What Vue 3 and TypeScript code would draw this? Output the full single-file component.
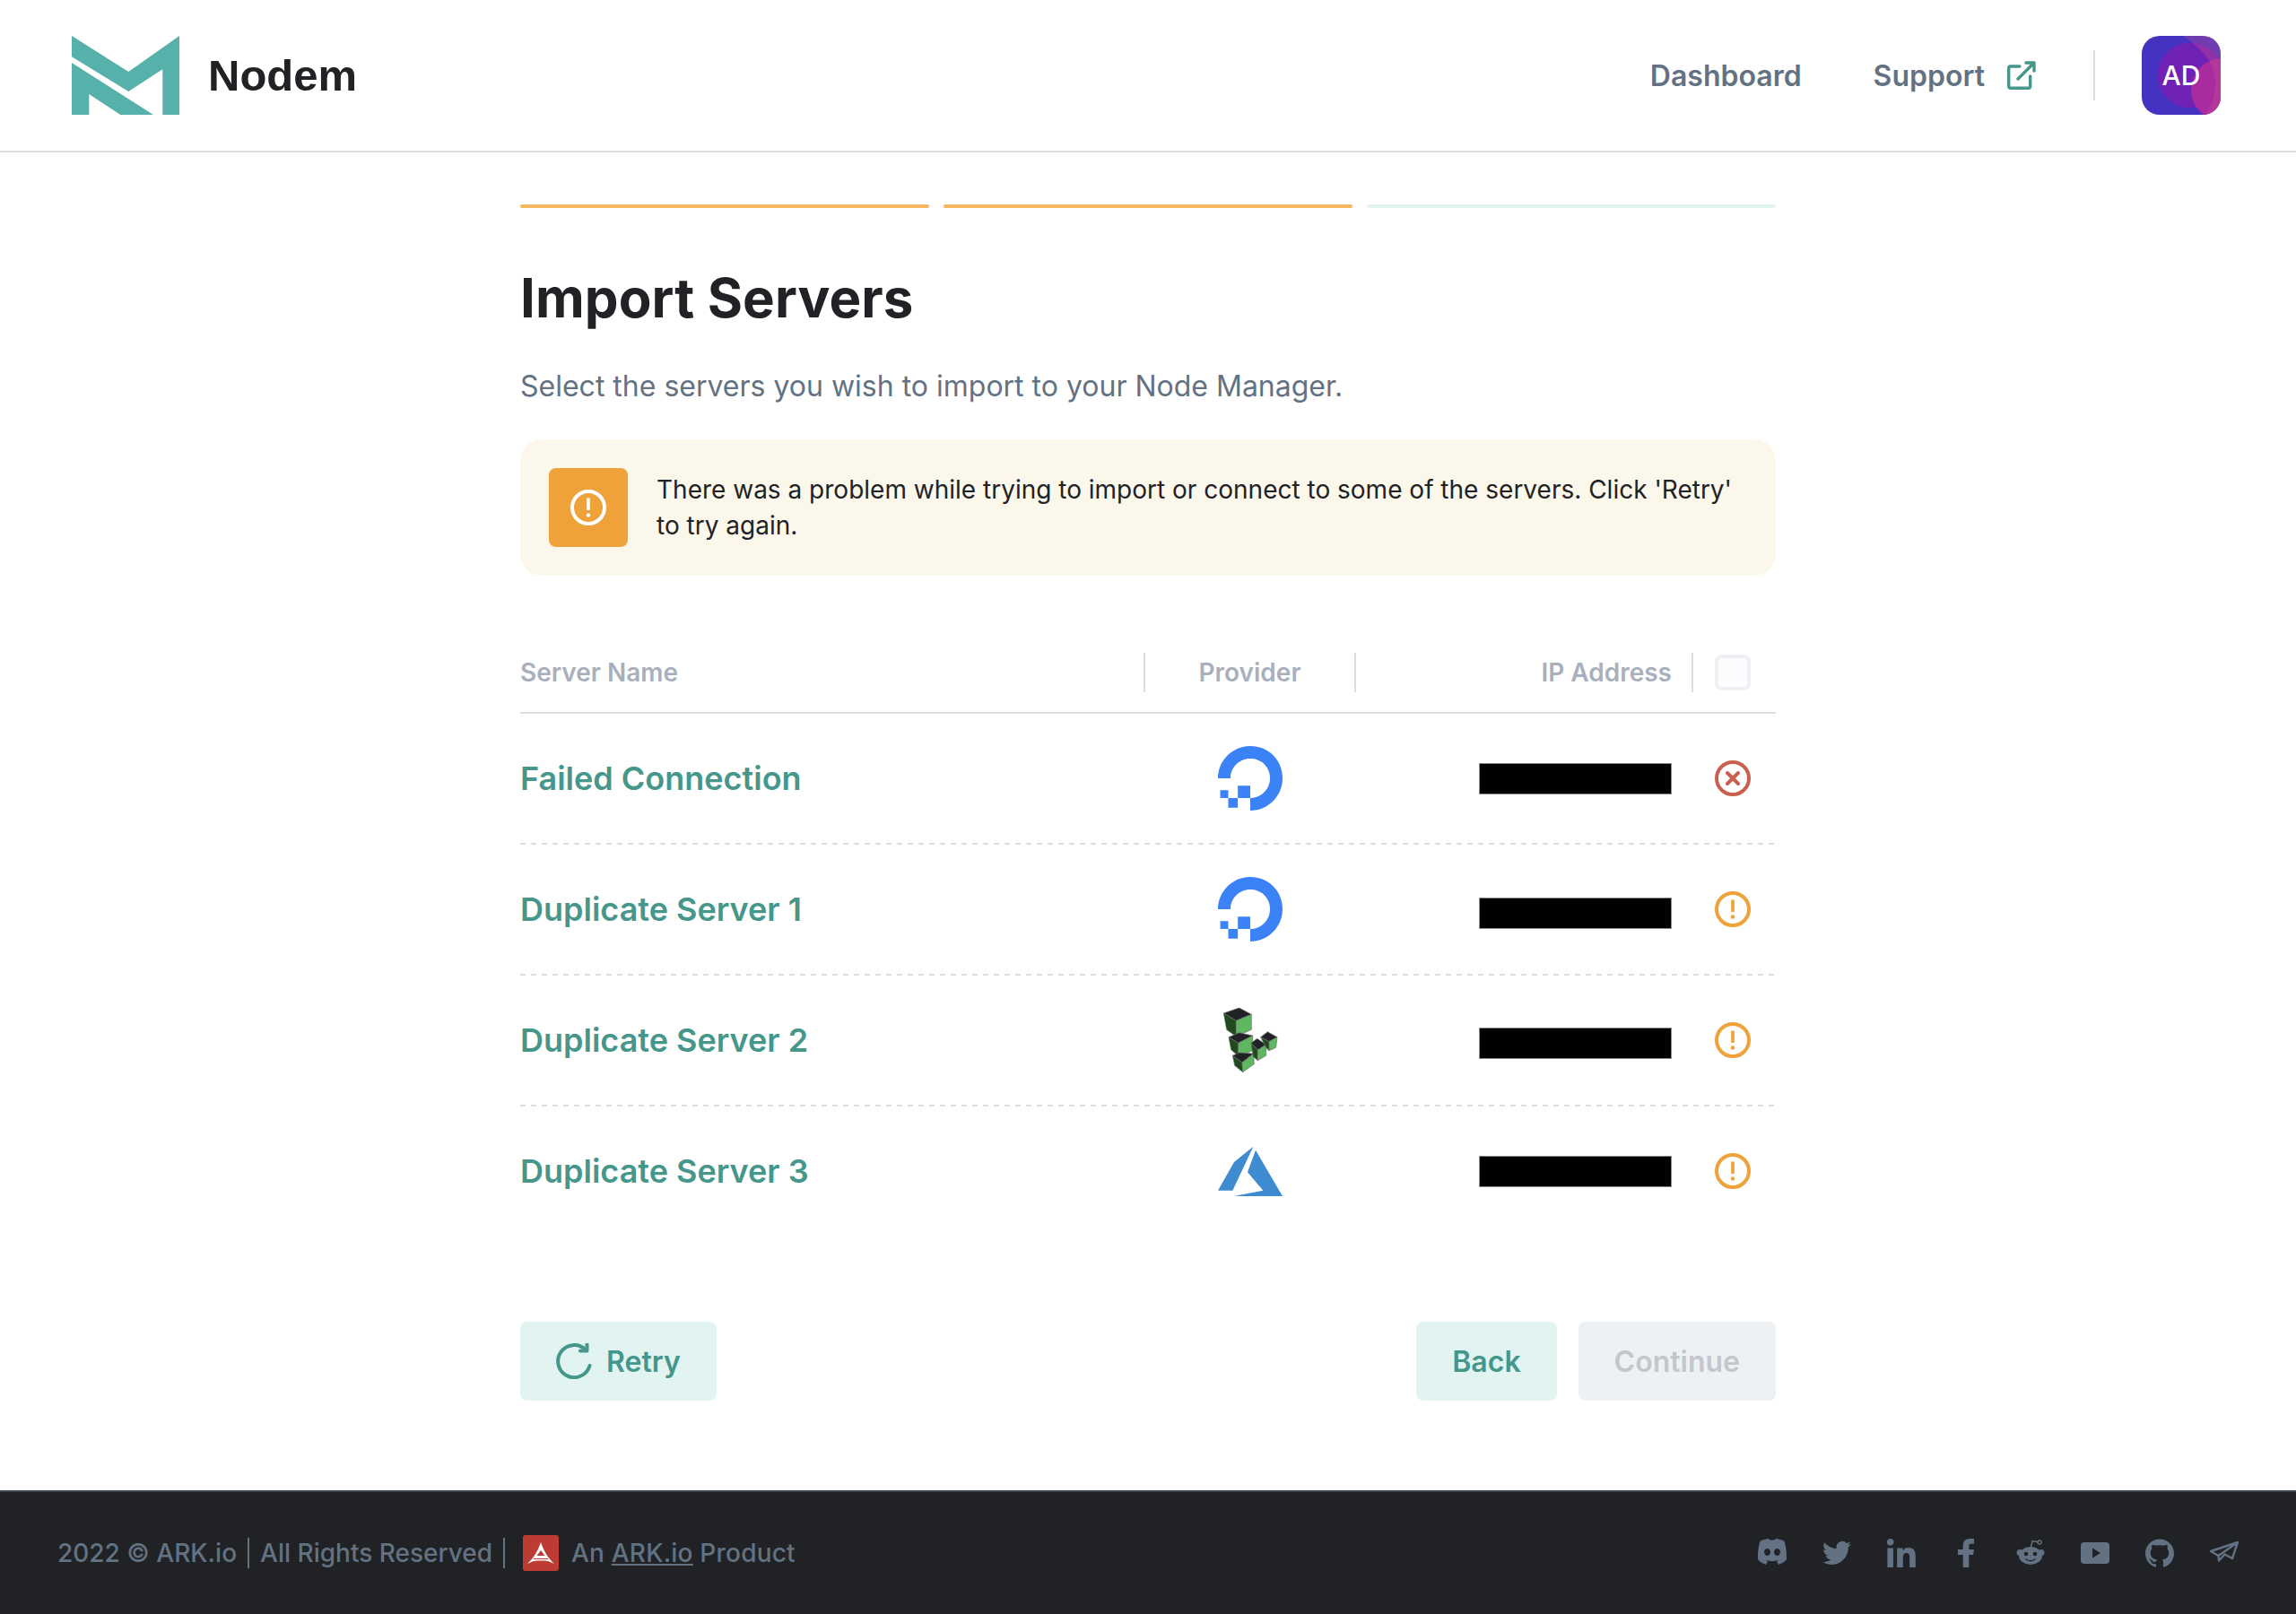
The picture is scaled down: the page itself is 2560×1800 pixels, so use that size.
<script setup lang="ts">
interface Row { name: string; provider: 'do' | 'linode' | 'azure'; status: 'error' | 'warning'; ipShift: number }
const rows: Row[] = [
  { name: 'Failed Connection', provider: 'do', status: 'error', ipShift: 0 },
  { name: 'Duplicate Server 1', provider: 'do', status: 'warning', ipShift: 9 },
  { name: 'Duplicate Server 2', provider: 'linode', status: 'warning', ipShift: 7 },
  { name: 'Duplicate Server 3', provider: 'azure', status: 'warning', ipShift: 0 },
]
const cubes = [
  { t: '133,90 185,72 226,94 175,115', l: '133,90 175,115 175,168 143,145', r: '175,115 226,94 226,145 175,168' },
  { t: '150,170 185,155 230,165 182,190', l: '150,170 182,190 182,233 158,212', r: '182,190 230,165 230,215 182,233' },
  { t: '163,232 185,222 233,225 195,255', l: '163,232 195,255 197,287 170,265', r: '195,255 233,225 235,260 197,287' },
  { t: '225,190 245,175 275,195 247,213', l: '225,190 247,213 247,248 232,235', r: '247,213 275,195 275,232 247,248' },
  { t: '257,170 280,152 312,170 285,185', l: '257,170 285,185 285,215 275,205', r: '285,185 312,170 308,205 285,215' },
]
</script>

<template>
  <div class="page">
    <header class="header">
      <div class="brand">
        <svg class="logo" viewBox="80 40 120 88" width="120" height="88">
          <path fill="#55b1a9" d="M80 40 143.3 80 200 40V128H181.3V77.3L143.3 102 80 63.3Z" />
          <path fill="#55b1a9" d="M80 70 171 128H134.3L99.3 105V128H80Z" />
        </svg>
        <span class="brand-name">Nodem</span>
      </div>
      <nav class="nav">
        <a class="nav-link">Dashboard</a>
        <a class="nav-link support">
          Support
          <svg width="32" height="32" viewBox="0 0 32 32" fill="none" stroke="#45968b" stroke-width="3.4" stroke-linecap="round" stroke-linejoin="round">
            <path d="M14 6H3.500a1.800 1.800 0 0 0-1.800 1.800v20.700a1.800 1.800 0 0 0 1.800 1.800h20.400a1.800 1.800 0 0 0 1.800-1.800V17" />
            <path d="M12 20 30 2M21 2h9v9" />
          </svg>
        </a>
        <span class="nav-divider"></span>
        <div class="avatar">
          <svg class="avatar-art" viewBox="0 0 88 88" width="88" height="88">
            <rect width="88" height="88" fill="#4333c0" />
            <circle cx="54" cy="44" r="36.500" fill="#7022b5" />
            <circle cx="90" cy="60" r="35" fill="#a82ba0" />
            <path d="M46 0C68 14 82 32 82 52 82 66 78 78 71 88H88V0Z" fill="#d0508f" opacity="0.32" />
          </svg>
          <span class="avatar-text">AD</span>
        </div>
      </nav>
    </header>

    <main class="main">
      <div class="steps">
        <span class="step done"></span>
        <span class="step done"></span>
        <span class="step"></span>
      </div>

      <h1 class="title">Import Servers</h1>
      <p class="subtitle">Select the servers you wish to import to your Node Manager.</p>

      <div class="alert">
        <div class="alert-icon">
          <svg width="40" height="40" viewBox="0 0 40 40" fill="none" stroke="#fff">
            <circle cx="20" cy="20" r="18" stroke-width="4" />
            <path d="M20 9.500V23" stroke-width="3.600" />
            <circle cx="20" cy="28.500" r="2.200" fill="#fff" stroke="none" />
          </svg>
        </div>
        <p class="alert-text">There was a problem while trying to import or connect to some of the servers. Click 'Retry' to try again.</p>
      </div>

      <div class="thead">
        <div class="th">Server Name</div>
        <div class="th th-center th-sep">Provider</div>
        <div class="th th-right th-sep">IP Address</div>
        <div class="th th-sep th-check"><span class="checkbox"></span></div>
      </div>

      <div v-for="row in rows" :key="row.name" class="tr">
        <div class="td-name">{{ row.name }}</div>
        <div class="td-provider">
          <svg v-if="row.provider === 'do'" width="72" height="72" viewBox="0 0 24 24" fill="#3b82f6">
            <path d="M12.040 0C5.408-.020.005 5.370.005 11.992h4.638c0-4.923 4.882-8.731 10.064-6.855a6.950 6.950 0 014.147 4.148c1.889 5.177-1.924 10.055-6.840 10.064v-4.610H7.391v4.623h4.610V24c7.860 0 13.967-7.588 11.397-15.830-1.115-3.590-3.985-6.446-7.575-7.575A12.800 12.800 0 0012.039 0zM7.390 19.362H3.828v3.564H7.390zm-3.563 0 .001-2.978H.850v2.978z" />
          </svg>
          <svg v-else-if="row.provider === 'linode'" width="72" height="72" viewBox="114 72 216 216" stroke="#6b6b6b" stroke-width="2" stroke-linejoin="round">
            <g v-for="(c, i) in cubes" :key="i">
              <polygon :points="c.t" fill="#212225" />
              <polygon :points="c.l" fill="#1f4a1c" />
              <polygon :points="c.r" fill="#5fb85f" />
            </g>
          </svg>
          <svg v-else width="72" height="72" viewBox="114 510 216 216" fill="#3f8bd0">
            <path d="M232 536 168 588 114 683H163Z" />
            <path d="M240 548 330 702H168L265 683 213 622Z" />
          </svg>
        </div>
        <div class="td-ip"><span class="redacted" :style="{ marginTop: row.ipShift + 'px' }"></span></div>
        <div class="td-status">
          <svg v-if="row.status === 'error'" width="40" height="40" viewBox="0 0 40 40" fill="none" stroke="#c9604f">
            <circle cx="20" cy="20" r="18" stroke-width="4" />
            <path d="M14 14 26 26M26 14 14 26" stroke-width="4" stroke-linecap="round" />
          </svg>
          <svg v-else width="40" height="40" viewBox="0 0 40 40" fill="none" stroke="#eea239">
            <circle cx="20" cy="20" r="18" stroke-width="4" />
            <path d="M20 9.500V23" stroke-width="3.600" />
            <circle cx="20" cy="28.500" r="2.200" fill="#eea239" stroke="none" />
          </svg>
        </div>
      </div>

      <div class="actions">
        <button class="btn btn-light retry">
          <svg width="40" height="40" viewBox="0 0 40 40" fill="none" stroke="#45968b" stroke-width="4" stroke-linecap="round" stroke-linejoin="round">
            <path d="M37.500 25A18 18 0 1 1 33 7.500" />
            <path d="M34.500 1V8.500H27" />
          </svg>
          Retry
        </button>
        <div class="actions-right">
          <button class="btn btn-light back">Back</button>
          <button class="btn btn-disabled continue">Continue</button>
        </div>
      </div>
    </main>

    <footer class="footer">
      <div class="footer-left">
        <span>2022 © ARK.io</span>
        <span class="fsep"></span>
        <span>All Rights Reserved</span>
        <span class="fsep"></span>
        <span class="ark">
          <svg width="40" height="40" viewBox="0 0 40 40">
            <rect width="40" height="40" rx="3" fill="#bc3c34" />
            <path fill="#fff" d="M20 8C22.500 16 28 26 35 32 30 29.500 27 28.500 24 28.500H16C13 28.500 10 29.500 5 32 12 26 17.500 16 20 8Z" />
            <path fill="#bc3c34" d="M20 17 24.500 23H15.500Z" />
            <path fill="#bc3c34" d="M12 26H28V27H12Z" />
          </svg>
        </span>
        <span class="product">An <span class="ark-link">ARK.io</span> Product</span>
      </div>
      <div class="socials">
        <svg class="si" viewBox="0 0 32 32"><path fill-rule="evenodd" d="M7 1C10 .3 11.500 0 12.500 0l.5 1.500h6L19.500 0c1 0 2.500.3 5.500 1 3 .6 4.500 1.800 5 3.500C31.500 10 32 15 32 23c-2 3-5 4.500-9 6l-2-3.500 2-1.500c-4.500 1.500-9.500 1.500-14 0l2 1.500L9 29c-4-1.500-7-3-9-6C0 15 .5 10 2 4.500 2.500 2.800 4 1.600 7 1ZM10.500 11C8.500 11 7 12.800 7 15s1.500 4 3.500 4 3.500-1.800 3.500-4-1.500-4-3.500-4Zm11 0c-2 0-3.500 1.800-3.500 4s1.500 4 3.500 4 3.500-1.800 3.500-4-1.500-4-3.500-4Z" /></svg>
        <svg class="si" viewBox="0 0 24 24"><path d="M23.953 4.570a10 10 0 01-2.825.775 4.958 4.958 0 002.163-2.723c-.951.555-2.005.959-3.127 1.184a4.920 4.920 0 00-8.384 4.482C7.690 8.095 4.067 6.130 1.640 3.162a4.822 4.822 0 00-.666 2.475c0 1.710.870 3.213 2.188 4.096a4.904 4.904 0 01-2.228-.616v.060a4.923 4.923 0 003.946 4.827 4.996 4.996 0 01-2.212.085 4.936 4.936 0 004.604 3.417 9.867 9.867 0 01-6.102 2.105c-.390 0-.779-.023-1.170-.067a13.995 13.995 0 007.557 2.209c9.053 0 13.998-7.496 13.998-13.985 0-.210 0-.420-.015-.630A9.935 9.935 0 0024 4.590z" /></svg>
        <svg class="si" viewBox="3.400 3.300 17.100 17.200"><path d="M20.447 20.452h-3.554v-5.569c0-1.328-.027-3.037-1.852-3.037-1.853 0-2.136 1.445-2.136 2.939v5.667H9.351V9h3.414v1.561h.046c.477-.900 1.637-1.850 3.370-1.850 3.601 0 4.267 2.370 4.267 5.455v6.286zM5.337 7.433c-1.144 0-2.063-.926-2.063-2.065 0-1.138.920-2.063 2.063-2.063 1.140 0 2.064.925 2.064 2.063 0 1.139-.925 2.065-2.064 2.065zm1.782 13.019H3.555V9h3.564v11.452z" /></svg>
        <svg class="si" viewBox="0 0 32 32"><path d="M12.700 32V18H7v-6h5.700V8c0-5 2.500-8 7.500-8H25v5.800h-3.200c-2 0-2.500.8-2.500 2.500V12H25l-.8 6h-4.900v14Z" /></svg>
        <svg class="si" viewBox="0 0 32 32">
          <circle cx="4" cy="15.500" r="3.500" />
          <circle cx="28" cy="15.500" r="3.500" />
          <ellipse cx="16" cy="19" rx="13" ry="10" />
          <path d="M16.500 9.500 18 2.500l6 1.300" fill="none" stroke="#637282" stroke-width="1.500" stroke-linecap="round" stroke-linejoin="round" />
          <circle cx="26" cy="4" r="2" fill="none" stroke="#637282" stroke-width="1.500" />
          <circle cx="11" cy="17" r="2.300" fill="#212225" />
          <circle cx="21" cy="17" r="2.300" fill="#212225" />
          <path d="M11 23c3 2 7 2 10 0" fill="none" stroke="#212225" stroke-width="1.500" stroke-linecap="round" />
        </svg>
        <svg class="si" viewBox="0 0 32 32"><path fill-rule="evenodd" d="M4 4h24a4 4 0 0 1 4 4v16a4 4 0 0 1-4 4H4a4 4 0 0 1-4-4V8a4 4 0 0 1 4-4Zm9 6.500v11l9-5.500Z" /></svg>
        <svg class="si" viewBox="0 0 24 24"><path d="M12 .297c-6.630 0-12 5.373-12 12 0 5.303 3.438 9.800 8.205 11.385.600.113.820-.258.820-.577 0-.285-.010-1.040-.015-2.040-3.338.724-4.042-1.610-4.042-1.610C4.422 18.070 3.633 17.700 3.633 17.700c-1.087-.744.084-.729.084-.729 1.205.084 1.838 1.236 1.838 1.236 1.070 1.835 2.809 1.305 3.495.998.108-.776.417-1.305.760-1.605-2.665-.300-5.466-1.332-5.466-5.930 0-1.310.465-2.380 1.235-3.220-.135-.303-.540-1.523.105-3.176 0 0 1.005-.322 3.300.495.960-.267 1.980-.399 3-.405 1.020.006 2.040.138 3 .405 2.280-.840 3.285-.495 3.285-.495.645 1.653.240 2.873.120 3.176.765.840 1.230 1.910 1.230 3.220 0 4.610-2.805 5.625-5.475 5.920.420.360.810 1.096.810 2.220 0 1.606-.015 2.896-.015 3.286 0 .315.210.690.825.570C20.565 22.092 24 17.592 24 12.297c0-6.627-5.373-12-12-12" /></svg>
        <svg class="si plane" viewBox="0 0 32 32"><path d="M1 14 31 4 25 22 16.500 17.500 10 24.500 9.500 19Z M31 4 9.500 19" stroke="#637282" stroke-width="2.400" stroke-linejoin="round" /></svg>
      </div>
    </footer>
  </div>
</template>

<style>
html, body { margin: 0; background: #fff; }
</style>

<style scoped>
.page {
  min-height: 1800px;
  display: flex;
  flex-direction: column;
  font-family: Inter, "Noto Sans", sans-serif;
  background: #fff;
}
.header {
  height: 168px;
  border-bottom: 2px solid #dddde3;
  padding: 0 84px 0 80px;
  display: flex;
  align-items: center;
  justify-content: space-between;
}
.brand { display: flex; align-items: center; gap: 32px; }
.logo { display: block; }
.brand-name {
  font-family: "Liberation Sans", Arial, sans-serif;
  font-size: 49px;
  font-weight: 700;
  color: #212225;
  line-height: 48px;
}
.nav { display: flex; align-items: center; }
.nav-link {
  font-size: 32px;
  font-weight: 600;
  color: #637282;
  display: flex;
  align-items: center;
  gap: 25px;
}
.support { margin-left: 80px; }
.nav-divider { width: 2px; height: 56px; background: #dddde3; margin: 0 52px 0 64px; }
.avatar {
  width: 88px;
  height: 88px;
  border-radius: 20px;
  overflow: hidden;
  display: grid;
  place-items: center;
}
.avatar-art, .avatar-text { grid-area: 1 / 1; }
.avatar-art { display: block; }
.avatar-text { font-size: 30px; font-weight: 500; color: #fff; position: relative; }
.main {
  width: 1400px;
  margin: 0 auto;
  padding-top: 58px;
  flex: 1;
}
.steps { display: grid; grid-template-columns: repeat(3, 1fr); gap: 16px; }
.step { height: 4px; background: #e1f4f2; border-radius: 2px; }
.step.done { background: #f5b660; }
.title {
  margin: 64px 0 0;
  font-size: 60px;
  line-height: 72px;
  font-weight: 700;
  letter-spacing: 0.1px;
  color: #212225;
}
.subtitle {
  margin: 43px 0 0;
  font-size: 32px;
  line-height: 40px;
  color: #637282;
}
.alert {
  margin-top: 39px;
  height: 152px;
  box-sizing: border-box;
  padding: 32px;
  background: #fbf7ea;
  border-radius: 24px;
  display: flex;
  gap: 32px;
  align-items: center;
}
.alert-icon {
  width: 88px;
  height: 88px;
  flex: none;
  background: #eea239;
  border-radius: 8px;
  display: grid;
  place-items: center;
}
.alert-text { margin: 0; font-size: 28px; line-height: 40px; color: #212225; }
.thead {
  margin-top: 86px;
  display: grid;
  grid-template-columns: 695px 235px 376px 94px;
  border-bottom: 2px solid #dddde3;
  padding-bottom: 22px;
}
.th {
  height: 44px;
  display: flex;
  align-items: center;
  font-size: 28px;
  font-weight: 600;
  color: #a9b0bd;
}
.th-sep { border-left: 2px solid #dddde3; box-sizing: border-box; }
.th-center { justify-content: center; }
.th-right { justify-content: flex-end; padding-right: 22px; }
.th-check { padding-left: 24px; }
.checkbox {
  width: 40px;
  height: 40px;
  box-sizing: border-box;
  border: 4px solid #eef0f4;
  border-radius: 8px;
  background: #fbfcfd;
}
.tr {
  display: grid;
  grid-template-columns: 695px 235px 376px 94px;
  height: 146px;
  box-sizing: border-box;
  padding-bottom: 2px;
  align-items: center;
  background: repeating-linear-gradient(90deg, #dddde3 0 6px, transparent 6px 12px) left bottom / 100% 2px no-repeat;
}
.tr:nth-last-child(2) { background: none; }
.td-name { font-size: 36px; font-weight: 600; color: #45968b; }
.td-provider { display: flex; justify-content: center; padding-left: 2px; }
.td-provider svg, .td-status svg { display: block; }
.td-ip { display: flex; justify-content: flex-end; padding-right: 22px; }
.redacted {
  width: 215px;
  height: 35px;
  box-sizing: border-box;
  background: #000;
  border: 1px solid #8a8a8a;
  display: block;
}
.td-status { padding-left: 26px; }
.actions {
  margin-top: 94px;
  display: flex;
  justify-content: space-between;
}
.actions-right { display: flex; gap: 24px; }
.btn {
  height: 88px;
  border: 0;
  border-radius: 8px;
  font-family: inherit;
  font-size: 32px;
  font-weight: 600;
  padding: 0 40px;
  display: flex;
  align-items: center;
  gap: 16px;
}
.btn-light { background: #e1f4f2; color: #45968b; }
.btn-disabled { background: #eef1f4; color: #c3c7cd; }
.footer {
  height: 136px;
  border-top: 2px solid #3d444d;
  background: #212225;
  padding: 0 64px;
  display: flex;
  align-items: center;
  justify-content: space-between;
  font-size: 28px;
  font-weight: 500;
  color: #637282;
}
.footer-left { display: flex; align-items: center; }
.fsep { width: 2px; height: 34px; background: #637282; margin: 0 12px; }
.ark { display: flex; margin: 0 14px 0 8px; }
.product { letter-spacing: 0.2px; }
.ark-link { text-decoration: underline; }
.socials { display: flex; gap: 40px; align-items: center; }
.si { width: 32px; height: 32px; fill: #637282; display: block; }
.plane { fill: none; }
</style>
